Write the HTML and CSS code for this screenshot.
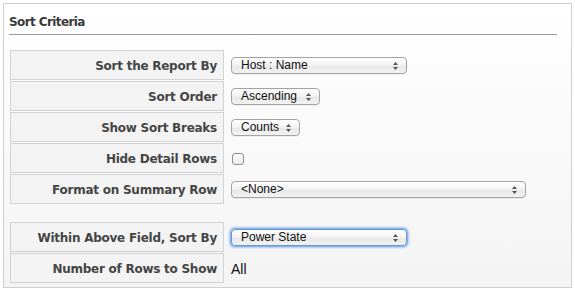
FILE: index.html
```html
<!DOCTYPE html>
<html lang="en">
<head>
    <meta charset="UTF-8">
    <title>Sort Criteria</title>
    <link rel="stylesheet" href="styles.css">
</head>
<body>
    <div class="panel">
        <h2 class="panel-title">Sort Criteria</h2>

        <div class="criteria">
            <div class="label">Sort the Report By</div>
            <div class="value">
                <span class="select w-host">Host : Name
                    <svg class="arrows" width="5" height="8" viewBox="0 0 5 8"><path d="M2.5 0 L5 3 H0 Z M0 5 H5 L2.5 8 Z" fill="#555"/></svg>
                </span>
            </div>

            <div class="label">Sort Order</div>
            <div class="value">
                <span class="select w-order">Ascending
                    <svg class="arrows" width="5" height="8" viewBox="0 0 5 8"><path d="M2.5 0 L5 3 H0 Z M0 5 H5 L2.5 8 Z" fill="#555"/></svg>
                </span>
            </div>

            <div class="label">Show Sort Breaks</div>
            <div class="value">
                <span class="select w-counts">Counts
                    <svg class="arrows" width="5" height="8" viewBox="0 0 5 8"><path d="M2.5 0 L5 3 H0 Z M0 5 H5 L2.5 8 Z" fill="#555"/></svg>
                </span>
            </div>

            <div class="label">Hide Detail Rows</div>
            <div class="value"><span class="checkbox"></span></div>

            <div class="label">Format on Summary Row</div>
            <div class="value">
                <span class="select w-none">&lt;None&gt;
                    <svg class="arrows" width="5" height="8" viewBox="0 0 5 8"><path d="M2.5 0 L5 3 H0 Z M0 5 H5 L2.5 8 Z" fill="#555"/></svg>
                </span>
            </div>

            <div class="spacer"></div>

            <div class="label">Within Above Field, Sort By</div>
            <div class="value">
                <span class="select w-host focused">Power State
                    <svg class="arrows" width="5" height="8" viewBox="0 0 5 8"><path d="M2.5 0 L5 3 H0 Z M0 5 H5 L2.5 8 Z" fill="#555"/></svg>
                </span>
            </div>

            <div class="label">Number of Rows to Show</div>
            <div class="value plain">All</div>
        </div>
    </div>
</body>
</html>
```

FILE: styles.css
```css
body {
    margin: 0;
    padding: 3px;
    background: #fff;
    font-family: "DejaVu Sans", Verdana, sans-serif;
    color: #333;
}
.panel {
    width: 569px;
    height: 285px;
    box-sizing: border-box;
    border: 1px solid #cfcfcf;
    background: linear-gradient(#fff, #f4f4f4);
    padding: 0 5px;
}
.panel-title {
    margin: 0;
    width: 548px;
    height: 31px;
    box-sizing: border-box;
    padding: 11px 0 0 0;
    font-size: 12px;
    font-weight: bold;
    color: #3a3a3a;
    letter-spacing: -0.6px;
    border-bottom: 1px solid #9a9a9a;
}
.criteria {
    display: grid;
    grid-template-columns: 214px 1fr;
    row-gap: 1px;
    margin: 15px 0 0 1px;
}
.label {
    height: 30px;
    box-sizing: border-box;
    border: 1px solid #d2d2d2;
    background: #f3f3f3;
    padding: 1px 6px 0 0;
    display: flex;
    align-items: center;
    justify-content: flex-end;
    font-size: 12px;
    font-weight: bold;
    color: #454545;
    letter-spacing: -0.25px;
}
.value {
    display: flex;
    align-items: center;
    padding-left: 7px;
}
.value.plain {
    font-family: "Liberation Sans", Arial, sans-serif;
    font-size: 14px;
    color: #111;
    padding-top: 1px;
}
.spacer {
    grid-column: 1 / 3;
    height: 16px;
}
.select {
    position: relative;
    height: 17px;
    box-sizing: border-box;
    display: inline-flex;
    align-items: center;
    padding-left: 9px;
    border: 1px solid #a3a3a3;
    border-radius: 4px;
    background: linear-gradient(#fff, #f1f1f1 50%, #e6e6e6 51%, #f3f3f3);
    font-family: "Liberation Sans", Arial, sans-serif;
    font-size: 12px;
    color: #111;
    box-shadow: 0 1px 0 rgba(0, 0, 0, 0.05);
}
.select .arrows {
    position: absolute;
    right: 8px;
    top: 4px;
}
.select.focused {
    border-color: #6a97d4;
    box-shadow: 0 0 0 1px #8db4ea, 0 0 2px 2px #a9c8f0;
}
.w-host { width: 176px; }
.w-order { width: 89px; }
.w-counts { width: 69px; }
.w-none { width: 295px; }
.checkbox {
    display: inline-block;
    width: 12px;
    height: 12px;
    box-sizing: border-box;
    margin-left: 1px;
    margin-top: 1px;
    border: 1px solid #8e8e8e;
    border-radius: 3px;
    background: linear-gradient(#fdfdfd, #ececec);
}
```
